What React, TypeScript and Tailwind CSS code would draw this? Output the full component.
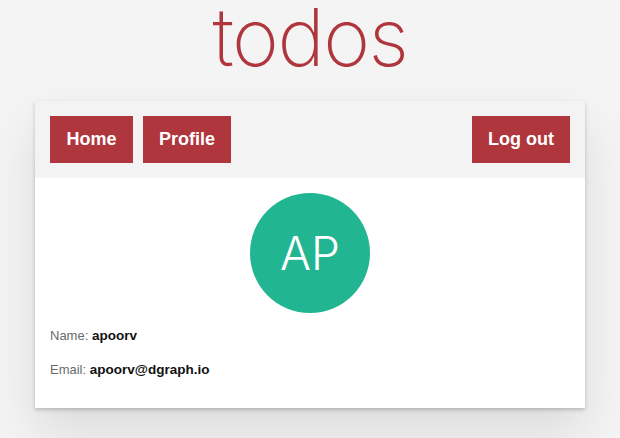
export default function App() {
  return (
    <div className="min-h-[438px] bg-[#f4f4f4] font-['Liberation_Sans',Arial,sans-serif] text-[#111]">

      {/* TITLE */}

      <h1 className="h-[101px] pt-[1px] text-center text-[80px] leading-[80px] font-extralight text-[#b0363d] font-['Inter',sans-serif] tracking-[-1.5px]">
        <span className="relative -top-[4px]">todos</span>
      </h1>

      {/* CARD */}

      <div className="mx-[35px] bg-white shadow-[0_2px_4px_rgba(0,0,0,0.2),0_25px_50px_rgba(0,0,0,0.1)]">

        <div className="flex items-center justify-between bg-[#f3f3f3] p-[15px]">
          <div className="flex gap-[10px]">
            <button className="h-[47px] w-[83px] bg-[#b0363d] text-white text-[18px] font-bold">
              Home
            </button>
            <button className="h-[47px] w-[88px] bg-[#b0363d] text-white text-[18px] font-bold">
              Profile
            </button>
          </div>
          <button className="h-[47px] w-[98px] bg-[#b0363d] text-white text-[18px] font-bold">
            Log out
          </button>
        </div>

        <div className="px-[15px] pt-[15px] pb-[28px]">
          <div className="flex justify-center">
            <div className="w-[120px] h-[120px] rounded-full bg-[#21b592] flex items-center justify-center text-white text-[46px] font-light font-['Inter',sans-serif]">
              AP
            </div>
          </div>

          <p className="mt-[13px] text-[13px] leading-[20px] text-[#6a6a6a]">
            Name: <span className="text-[13.5px] font-bold text-[#111]">apoorv</span>
          </p>

          <p className="mt-[14px] text-[13px] leading-[20px] text-[#6a6a6a]">
            Email: <span className="text-[13.5px] font-bold text-[#111]">apoorv@dgraph.io</span>
          </p>
        </div>

      </div>

    </div>
  );
}
